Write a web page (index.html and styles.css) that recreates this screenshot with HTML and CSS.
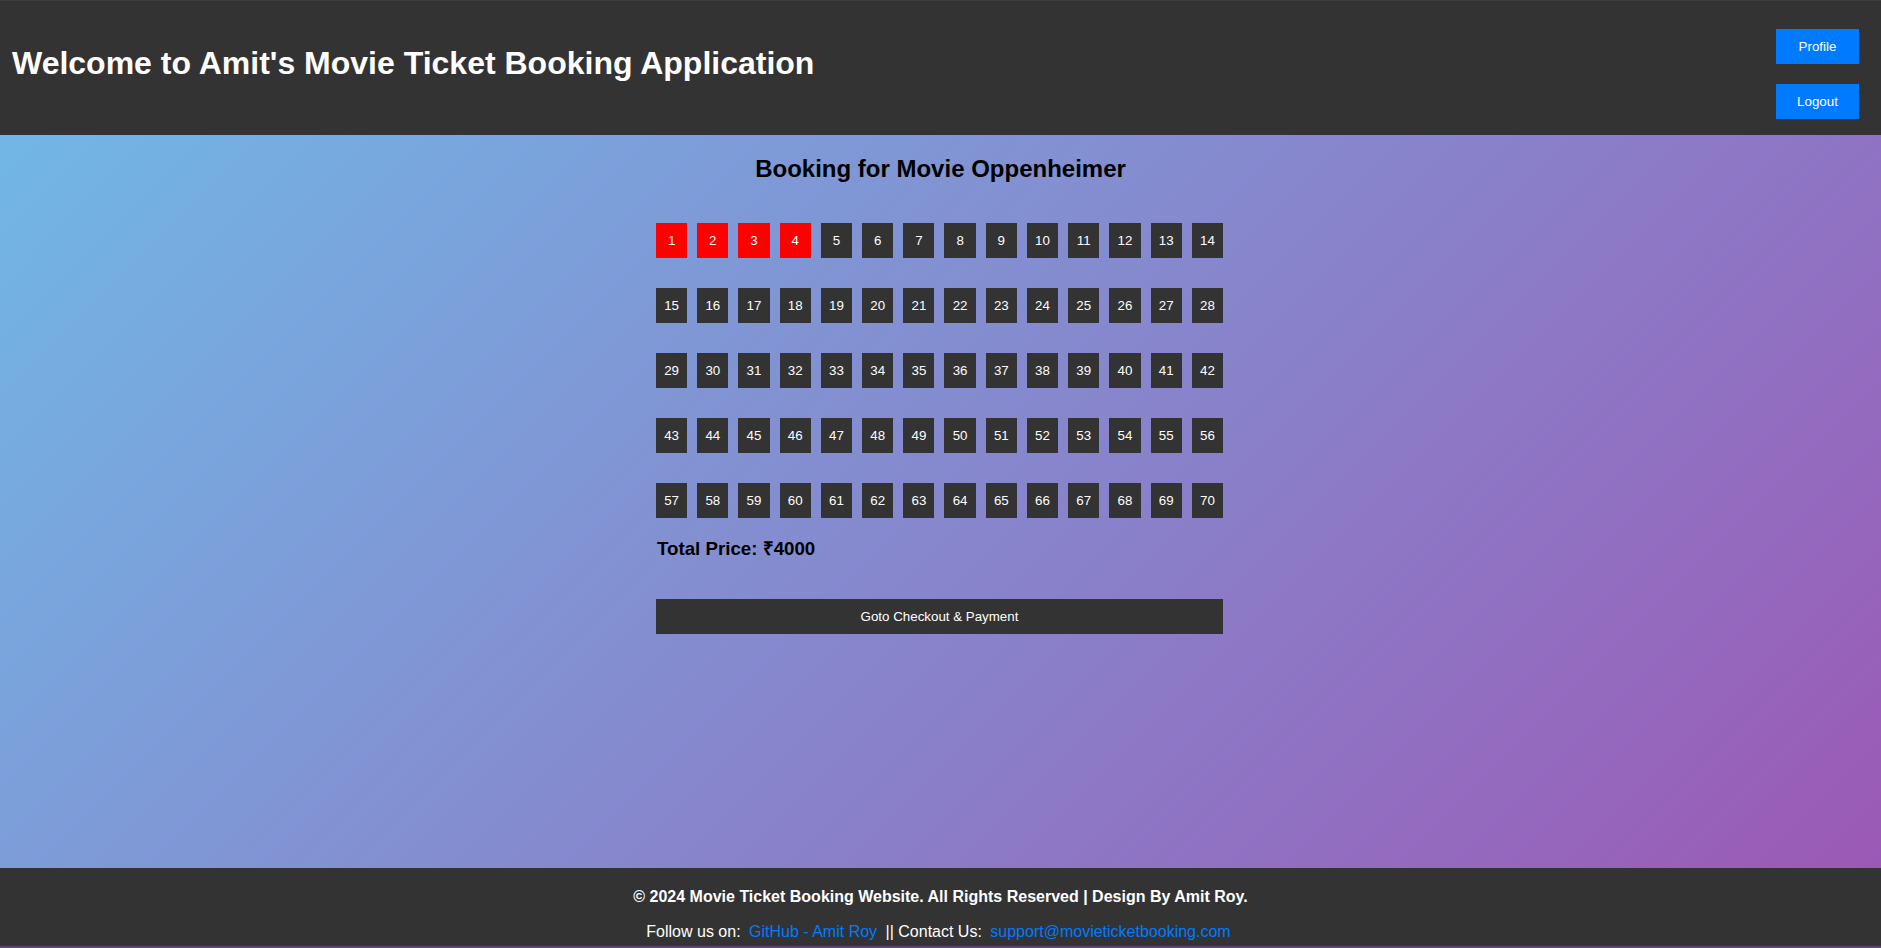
FILE: index.html
```html
<!DOCTYPE html>
<html lang="en">
<head>
<meta charset="utf-8">
<title>Movie Ticket Booking</title>
<link rel="stylesheet" href="styles.css">
</head>
<body>
<header class="site-header">
  <h1 class="site-title">Welcome to Amit's Movie Ticket Booking Application</h1>
  <div class="header-actions">
    <button class="header-btn">Profile</button>
    <button class="header-btn">Logout</button>
  </div>
</header>
<main class="booking">
  <h2 class="booking-title">Booking for Movie Oppenheimer</h2>
  <div class="seat-grid">
    <button class="seat seat-selected">1</button>
    <button class="seat seat-selected">2</button>
    <button class="seat seat-selected">3</button>
    <button class="seat seat-selected">4</button>
    <button class="seat">5</button>
    <button class="seat">6</button>
    <button class="seat">7</button>
    <button class="seat">8</button>
    <button class="seat">9</button>
    <button class="seat">10</button>
    <button class="seat">11</button>
    <button class="seat">12</button>
    <button class="seat">13</button>
    <button class="seat">14</button>
    <button class="seat">15</button>
    <button class="seat">16</button>
    <button class="seat">17</button>
    <button class="seat">18</button>
    <button class="seat">19</button>
    <button class="seat">20</button>
    <button class="seat">21</button>
    <button class="seat">22</button>
    <button class="seat">23</button>
    <button class="seat">24</button>
    <button class="seat">25</button>
    <button class="seat">26</button>
    <button class="seat">27</button>
    <button class="seat">28</button>
    <button class="seat">29</button>
    <button class="seat">30</button>
    <button class="seat">31</button>
    <button class="seat">32</button>
    <button class="seat">33</button>
    <button class="seat">34</button>
    <button class="seat">35</button>
    <button class="seat">36</button>
    <button class="seat">37</button>
    <button class="seat">38</button>
    <button class="seat">39</button>
    <button class="seat">40</button>
    <button class="seat">41</button>
    <button class="seat">42</button>
    <button class="seat">43</button>
    <button class="seat">44</button>
    <button class="seat">45</button>
    <button class="seat">46</button>
    <button class="seat">47</button>
    <button class="seat">48</button>
    <button class="seat">49</button>
    <button class="seat">50</button>
    <button class="seat">51</button>
    <button class="seat">52</button>
    <button class="seat">53</button>
    <button class="seat">54</button>
    <button class="seat">55</button>
    <button class="seat">56</button>
    <button class="seat">57</button>
    <button class="seat">58</button>
    <button class="seat">59</button>
    <button class="seat">60</button>
    <button class="seat">61</button>
    <button class="seat">62</button>
    <button class="seat">63</button>
    <button class="seat">64</button>
    <button class="seat">65</button>
    <button class="seat">66</button>
    <button class="seat">67</button>
    <button class="seat">68</button>
    <button class="seat">69</button>
    <button class="seat">70</button>
  </div>
  <div class="summary">
    <h3 class="total-price">Total Price: ₹4000</h3>
    <button class="checkout-btn">Goto Checkout &amp; Payment</button>
  </div>
</main>
<footer class="site-footer">
  <p class="footer-copy">© 2024 Movie Ticket Booking Website. All Rights Reserved | Design By Amit Roy.</p>
  <p class="footer-links">Follow us on: <a class="footer-link" href="#">GitHub - Amit Roy</a> || Contact Us: <a class="footer-link" href="#">support@movieticketbooking.com</a></p>
</footer>
</body>
</html>
```
FILE: styles.css
```css
* {
  box-sizing: border-box;
}

html, body {
  margin: 0;
  padding: 0;
}

body {
  height: 100vh;
  display: flex;
  flex-direction: column;
  font-family: "Liberation Sans", Arial, sans-serif;
  background: #5f3f7d;
  overflow: hidden;
}

.site-header {
  flex: 0 0 135px;
  height: 135px;
  background: #333333;
  border-top: 1px solid #3d3d3d;
  display: flex;
  justify-content: space-between;
  align-items: flex-start;
  padding: 0 22px 0 12px;
}

.site-title {
  margin: 0;
  margin-top: 44px;
  font-size: 32px;
  font-weight: bold;
  color: #ffffff;
  line-height: 37px;
}

.header-actions {
  display: flex;
  flex-direction: column;
  gap: 20px;
  margin-top: 28px;
}

.header-btn {
  width: 83px;
  height: 35px;
  border: none;
  background: #007bff;
  color: #ffffff;
  font-family: "Liberation Sans", Arial, sans-serif;
  font-size: 13.33px;
  padding: 0;
}

.booking {
  flex: 1 1 auto;
  background: linear-gradient(135deg, #71b7e6, #9b59b6);
  display: flex;
  flex-direction: column;
  align-items: center;
}

.booking-title {
  margin: 20px 0 0;
  font-size: 24px;
  line-height: 28px;
  font-weight: bold;
  color: #000000;
}

.seat-grid {
  margin-top: 40px;
  margin-right: 2px;
  width: 567px;
  display: grid;
  grid-template-columns: repeat(14, 1fr);
  column-gap: 10px;
  row-gap: 30px;
}

.seat {
  height: 35px;
  border: none;
  padding: 0;
  background: #333333;
  color: #ffffff;
  font-family: "Liberation Sans", Arial, sans-serif;
  font-size: 13.33px;
}

.seat-selected {
  background: #ff0000;
}

.summary {
  width: 567px;
  margin-right: 2px;
}

.total-price {
  margin: 20px 0 0;
  padding-left: 1px;
  font-size: 18.72px;
  line-height: 21.5px;
  font-weight: bold;
  color: #000000;
}

.checkout-btn {
  display: block;
  width: 100%;
  height: 35px;
  margin-top: 39px;
  border: none;
  background: #333333;
  color: #ffffff;
  font-family: "Liberation Sans", Arial, sans-serif;
  font-size: 13.33px;
}

.site-footer {
  flex: 0 0 78px;
  height: 78px;
  margin-bottom: 2px;
  background: #333333;
  color: #ffffff;
  text-align: center;
  padding-top: 4px;
  font-size: 16px;
}

.site-footer p {
  margin: 16px 0 0;
  line-height: 18.4px;
}

.site-footer .footer-links {
  margin-top: 17px;
}

.footer-copy {
  font-weight: bold;
}

.footer-link {
  color: #007bff;
  text-decoration: none;
  margin: 0 4px;
}
```
